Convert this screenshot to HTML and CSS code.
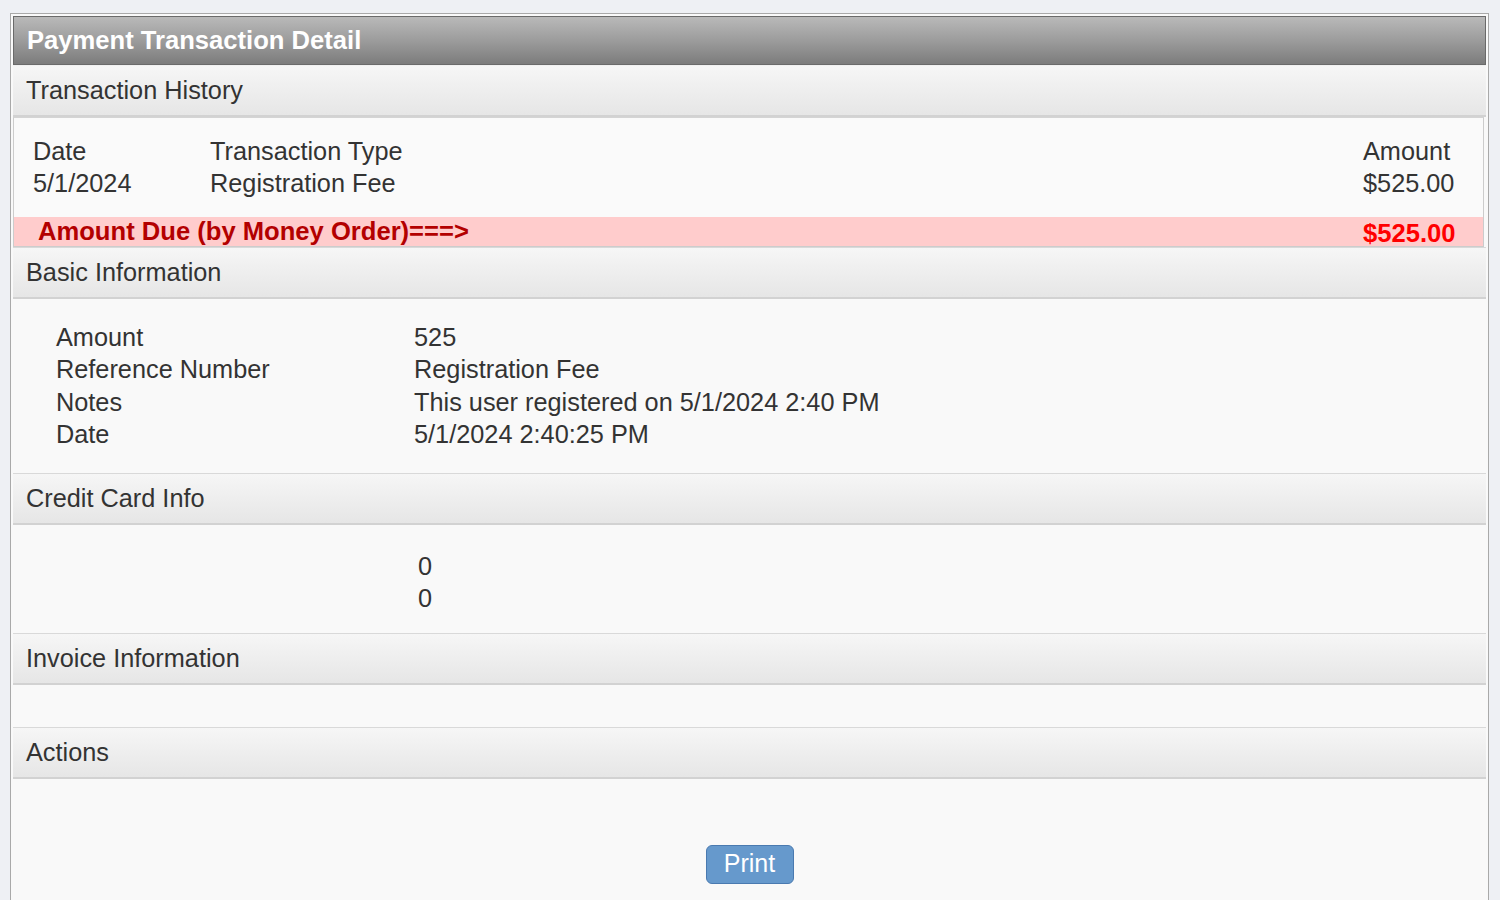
FILE: index.html
```html
<!DOCTYPE html>
<html lang="en">
<head>
<meta charset="utf-8">
<title>Payment Transaction Detail</title>
<link rel="stylesheet" href="styles.css">
</head>
<body>
<div class="panel">
  <div class="title">Payment Transaction Detail</div>

  <div class="sect-head">Transaction History</div>
  <div class="history">
    <div class="hist-row">
      <div class="c-date">Date</div>
      <div class="c-type">Transaction Type</div>
      <div class="c-amt">Amount</div>
    </div>
    <div class="hist-row">
      <div class="c-date">5/1/2024</div>
      <div class="c-type">Registration Fee</div>
      <div class="c-amt">$525.00</div>
    </div>
    <div class="due-row">
      <div class="due-label">Amount Due (by Money Order)===&gt;</div>
      <div class="due-amt">$525.00</div>
    </div>
  </div>

  <div class="sect-head">Basic Information</div>
  <div class="sect-body basic">
    <div class="kv"><div class="k">Amount</div><div class="v">525</div></div>
    <div class="kv"><div class="k">Reference Number</div><div class="v">Registration Fee</div></div>
    <div class="kv"><div class="k">Notes</div><div class="v">This user registered on 5/1/2024 2:40 PM</div></div>
    <div class="kv"><div class="k">Date</div><div class="v">5/1/2024 2:40:25 PM</div></div>
  </div>

  <div class="sect-head">Credit Card Info</div>
  <div class="sect-body card">
    <div class="kv"><div class="k"></div><div class="v v-card">0</div></div>
    <div class="kv"><div class="k"></div><div class="v v-card">0</div></div>
  </div>

  <div class="sect-head">Invoice Information</div>
  <div class="sect-body invoice"></div>

  <div class="sect-head">Actions</div>
  <div class="sect-body actions">
    <button class="print-btn" type="button">Print</button>
  </div>
</div>
</body>
</html>
```
FILE: styles.css
```css
html, body {
  margin: 0;
  padding: 0;
}
body {
  background: #eef0f4;
  font-family: "Liberation Sans", Arial, sans-serif;
  font-size: 25.3px;
  color: #333333;
}
.panel {
  margin: 13px 11px 0 10px;
  border: 1px solid #a9a9a9;
  border-bottom: none;
  padding: 2px 2px 0 2px;
  background: #f9f9f9;
  min-height: 900px;
}
.title {
  height: 47px;
  line-height: 47px;
  border: 1px solid #6a6a6a;
  background: linear-gradient(to bottom, #b9b9b9 0%, #9c9c9c 50%, #7c7c7c 100%);
  color: #ffffff;
  font-weight: bold;
  font-size: 25.6px;
  padding-left: 13px;
}
.sect-head {
  height: 49px;
  line-height: 49px;
  border-top: 1px solid #d9d9d9;
  border-bottom: 2px solid #d2d2d2;
  background: linear-gradient(to bottom, #f6f6f6 0%, #e6e6e6 100%);
  padding-left: 13px;
  color: #333333;
}
.title + .sect-head {
  border-top: 1px solid #f0f0f0;
}
.history {
  margin-right: 2px;
  border: 1px solid #cccccc;
  border-top-color: #d4d4d4;
  background: #fafafa;
  padding-top: 17px;
}
.hist-row {
  display: flex;
  line-height: 32px;
  padding-left: 19px;
}
.c-date {
  width: 177px;
}
.c-type {
  flex: 1;
}
.c-amt {
  width: 120px;
}
.due-row {
  display: flex;
  margin-top: 18px;
  background: #ffcccc;
  height: 29px;
  line-height: 29px;
  font-weight: bold;
  font-size: 25.6px;
  padding-left: 24px;
}
.due-label {
  flex: 1;
  color: #b30000;
}
.due-amt {
  width: 120px;
  color: #ff0000;
  position: relative;
  top: 2px;
}
.sect-body {
  background: #f9f9f9;
}
.kv {
  display: flex;
  line-height: 32.4px;
}
.k {
  width: 358px;
  flex: none;
}
.basic {
  padding: 22px 0 22px 43px;
}
.card {
  padding: 25px 0 19px 43px;
}
.v-card {
  padding-left: 4px;
}
.invoice {
  height: 42px;
}
.actions {
  padding-top: 66px;
  display: flex;
  justify-content: center;
}
.print-btn {
  width: 88px;
  height: 39px;
  box-sizing: border-box;
  border: 1px solid #4a7ab0;
  border-radius: 6px;
  background: #6699cc;
  color: #ffffff;
  font-family: "Liberation Sans", Arial, sans-serif;
  font-size: 25px;
  line-height: 35px;
  padding: 0 0 2px 0;
  cursor: pointer;
}
```
